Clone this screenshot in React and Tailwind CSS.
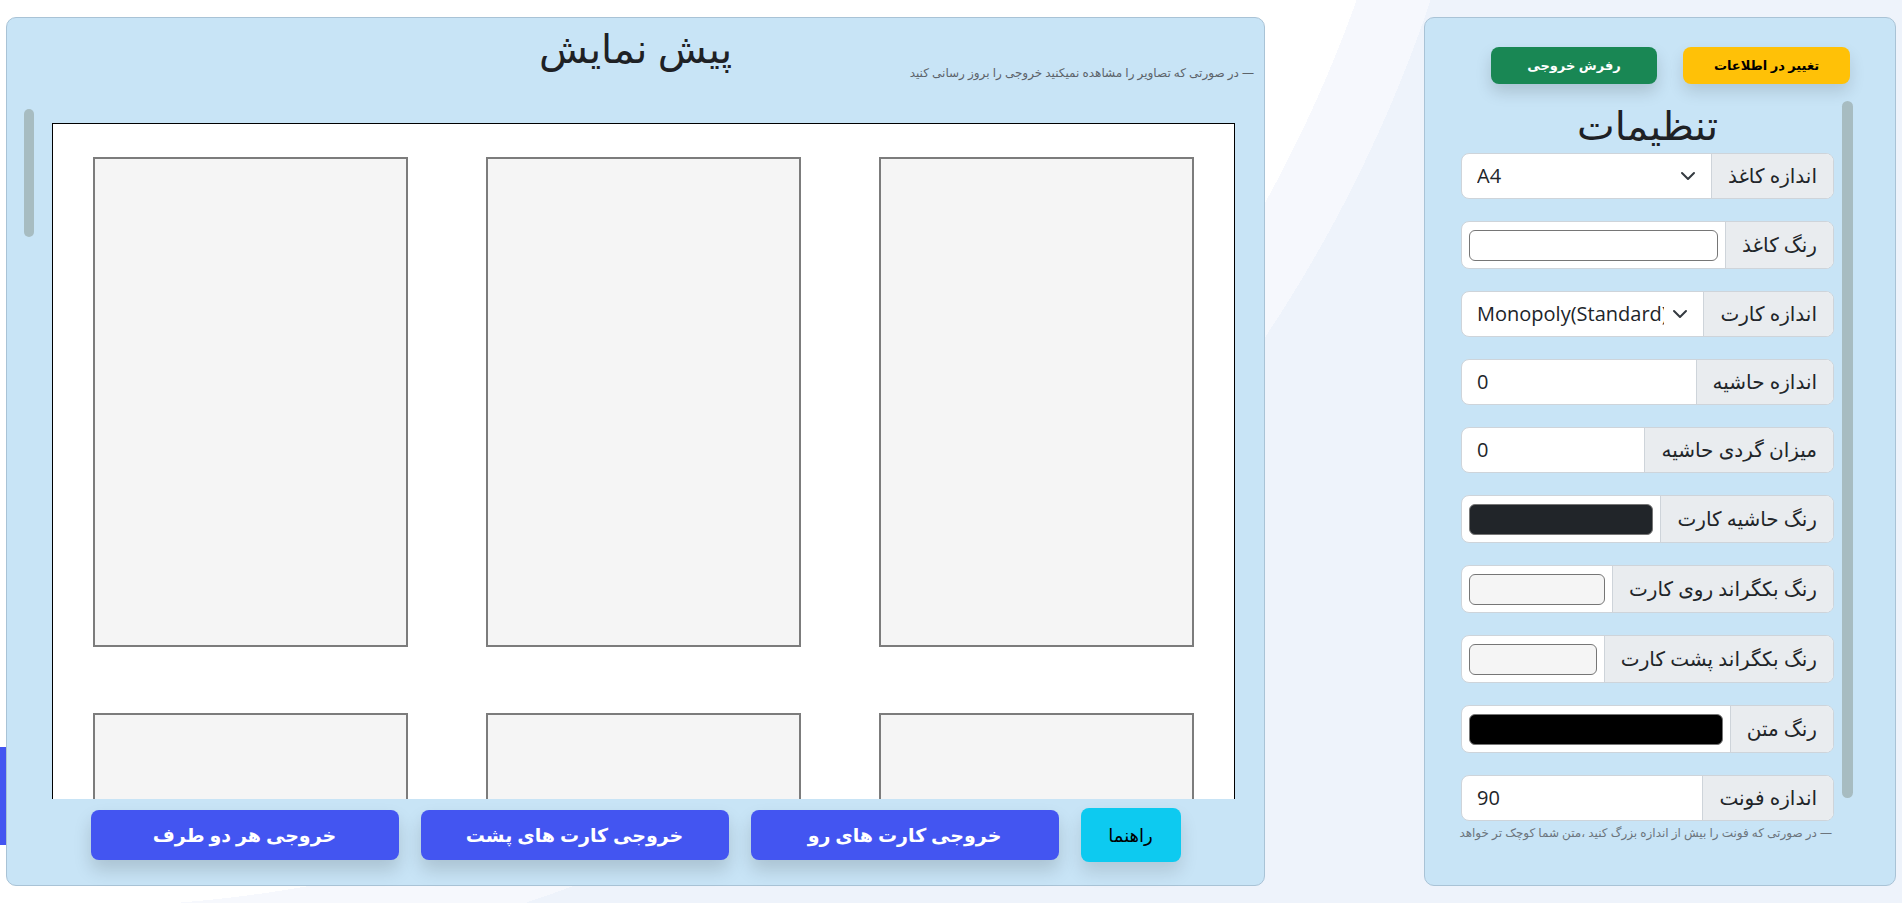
import React from 'react';

const settings = [
    { label: 'اندازه کاغذ', type: 'select', value: 'A4' },
    { label: 'رنگ کاغذ', type: 'color', color: '#ffffff' },
    { label: 'اندازه کارت', type: 'select', value: 'Monopoly(Standard)' },
    { label: 'اندازه حاشیه', type: 'text', value: '0' },
    { label: 'میزان گردی حاشیه', type: 'text', value: '0' },
    { label: 'رنگ حاشیه کارت', type: 'color', color: '#212529' },
    { label: 'رنگ بکگراند روی کارت', type: 'color', color: '#f5f5f5' },
    { label: 'رنگ بکگراند پشت کارت', type: 'color', color: '#f5f5f5' },
    { label: 'رنگ متن', type: 'color', color: '#000000' },
    { label: 'اندازه فونت', type: 'text', value: '90' },
];

const Chevron = () => (
    <svg width="16" height="16" viewBox="0 0 16 16" className="shrink-0">
        <path d="M2 5l6 6 6-6" fill="none" stroke="#343a40" strokeWidth="2" strokeLinecap="round" strokeLinejoin="round" />
    </svg>
);

const SettingRow = ({ item }) => {
    const isColor = item.type === 'color';
    return (
        <div className={`flex ${isColor ? 'h-[48px]' : 'h-[46px]'} rounded-lg border border-[#ced4da] bg-white overflow-hidden`}>
            <div className="flex items-center px-4 bg-[#e9ecef] border-l border-[#ced4da] text-[20px] text-[#212529] whitespace-nowrap">
                {item.label}
            </div>
            <div dir="ltr" className="flex-1 min-w-0 flex items-center">
                {isColor && (
                    <div
                        className="mx-[7px] h-[31px] w-full rounded-[6px] border border-[#767676]"
                        style={{ backgroundColor: item.color }}
                    />
                )}
                {item.type === 'select' && (
                    <div className="flex items-center w-full pl-[15px] pr-[15px] gap-2">
                        <span className="flex-1 min-w-0 overflow-hidden whitespace-nowrap text-[20px] text-[#212529]">{item.value}</span>
                        <Chevron />
                    </div>
                )}
                {item.type === 'text' && (
                    <span className="pl-[15px] text-[20px] text-[#212529]">{item.value}</span>
                )}
            </div>
        </div>
    );
};

const Card = () => (
    <div className="h-[490px] border-2 border-[#7c7c7c] bg-[#f5f5f5]" />
);

const Page = () => (
    <div className="mx-auto mb-4 w-[1183px] h-[1673px] shrink-0 border border-black bg-white">
        <div className="grid grid-cols-3 gap-x-[78px] gap-y-[66px] px-[40px] pt-[33px]">
            {Array.from({ length: 9 }).map((_, i) => <Card key={i} />)}
        </div>
    </div>
);

const exportBtn = "w-[308px] h-[50px] rounded-lg bg-[#4355f1] text-[19px] font-bold text-white shadow-[0_10px_18px_rgba(0,0,0,0.15)]";

const App = () => {
    return (
        <div
            dir="rtl"
            className="relative w-full h-[903px] overflow-hidden flex justify-between px-[6px] py-[17px] bg-[#eef3fb] bg-[radial-gradient(circle_at_70px_-459px,#ffffff_1366px,#f6f8fd_1366px,#f6f8fd_1436px,#eef3fb_1436px)] font-['Open_Sans','DejaVu_Sans',sans-serif] text-[#212529]"
        >
            {/* Settings */}
            <div className="w-[472px] h-full flex flex-col rounded-[10px] border border-[#a9c3d6] bg-[#c8e4f6]">
                <div className="flex justify-start gap-[26px] pr-[45px] pt-[29px]">
                    <button className="w-[167px] h-[37px] rounded-lg bg-[#ffc107] text-[13px] font-bold text-black shadow-[0_8px_16px_rgba(0,0,0,0.12)]">
                        تغییر در اطلاعات
                    </button>
                    <button className="w-[166px] h-[37px] rounded-lg bg-[#198754] text-[13px] font-bold text-white shadow-[0_8px_16px_rgba(0,0,0,0.15)]">
                        رفرش خروجی
                    </button>
                </div>
                <div className="mt-[14px] mr-[40px] ml-[12px] h-[744px] flex">
                    {/* scrollbar track */}
                    <div className="w-[15px] shrink-0 flex justify-center pt-[3px]">
                        <div className="w-[11px] h-[697px] rounded-full bg-[#a7bcc1]" />
                    </div>
                    <div className="flex-1 min-w-0 overflow-hidden pl-[24px] pr-[6px]">
                        <h1 className="pt-[2px] text-center text-[40px] leading-[50px] font-normal text-[#1e2125] mb-[3px]">تنظیمات</h1>
                        <div className="flex flex-col gap-[22px]">
                            {settings.map((s) => <SettingRow key={s.label} item={s} />)}
                        </div>
                        <div className="mt-[3px] pr-[2px] whitespace-nowrap text-[12px] leading-[18px] text-[#6c757d]">
                            — در صورتی که فونت را بیش از اندازه بزرگ کنید ،متن شما کوچک تر خواهد
                        </div>
                    </div>
                </div>
            </div>

            {/* Preview */}
            <div className="w-[1259px] h-full flex flex-col rounded-[10px] border border-[#a9c3d6] bg-[#c8e4f6]">
                <h1 className="pt-[6px] text-center text-[40px] leading-[48px] font-normal text-[#1e2125]">پیش نمایش</h1>
                <div className="-mt-[7px] pr-[10px] text-[12px] leading-[16px] text-[#5c636a]">
                    — در صورتی که تصاویر را مشاهده نمیکنید خروجی را بروز رسانی کنید
                </div>
                <div className="mt-[26px] mr-[14px] ml-[15px] h-[692px] flex">
                    <div className="flex-1 min-w-0 overflow-hidden pt-[16px]">
                        <Page />
                    </div>
                    {/* scrollbar track */}
                    <div className="w-[14px] shrink-0 flex justify-center pt-[2px]">
                        <div className="w-[10px] h-[128px] rounded-full bg-[#a7bcc1]" />
                    </div>
                </div>
                <div className="flex justify-center items-center gap-[22px] pt-[9px]">
                    <button className="w-[100px] h-[54px] rounded-lg bg-[#0dcaf0] text-[18px] text-black shadow-[0_10px_18px_rgba(0,0,0,0.12)]">
                        راهنما
                    </button>
                    <button className={exportBtn}>خروجی کارت های رو</button>
                    <button className={exportBtn}>خروجی کارت های پشت</button>
                    <button className={exportBtn}>خروجی هر دو طرف</button>
                </div>
            </div>

            {/* side feedback tab */}
            <div className="fixed left-0 top-[747px] w-[6px] h-[98px] overflow-hidden bg-[#4355f1]">
                <div className="w-[98px] -rotate-90 origin-top-left translate-y-[98px] text-[9px] text-white text-center whitespace-nowrap">
                    بازخورد
                </div>
            </div>
        </div>
    );
};

export default App;
